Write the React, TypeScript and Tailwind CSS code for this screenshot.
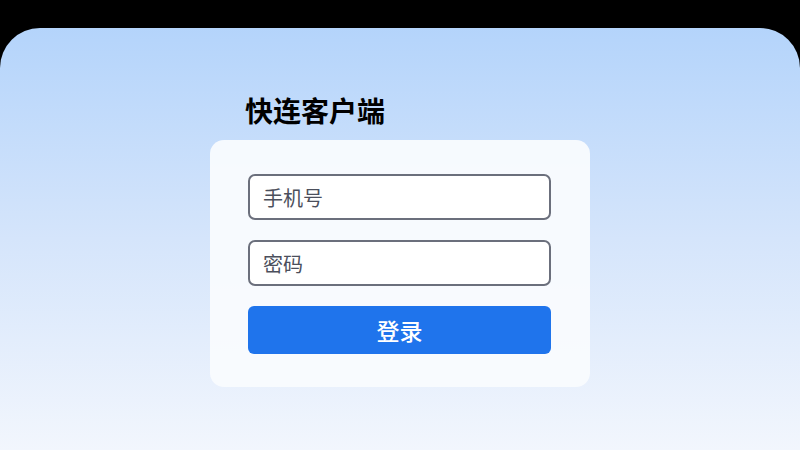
export default function App() {
  return (
    <div className="w-[800px] h-[450px] bg-black pt-[28px] overflow-hidden" style={{ fontFamily: '"Noto Sans CJK SC", "Noto Sans", sans-serif' }}>
      <div className="h-[422px] rounded-t-[40px] bg-gradient-to-b from-[#b4d4fb] via-[#d5e5fb] to-[#f2f6fd] flex flex-col items-center">
        <div className="w-[380px] mt-[64px]">
          <h1 className="ml-[35px] text-[28px] leading-[36px] font-bold text-black">快连客户端</h1>
          <div className="mt-[12px] rounded-[14px] bg-[#f9fbfe]/95 pt-[34px] pb-[33px] pl-[38px] pr-[39px] flex flex-col gap-[20px]">
            <input
              placeholder="手机号"
              className="h-[46px] w-full rounded-[7px] border-2 border-[#6b6f7c] bg-white px-[13px] text-[20px] placeholder:text-[#4b4f5c] outline-none"
            />
            <input
              placeholder="密码"
              type="password"
              className="h-[46px] w-full rounded-[7px] border-2 border-[#6b6f7c] bg-white px-[13px] text-[20px] placeholder:text-[#4b4f5c] outline-none"
            />
            <button className="h-[48px] w-full rounded-[6px] bg-[#1f74ec] text-white text-[23px] font-medium">登录</button>
          </div>
        </div>
      </div>
    </div>
  );
}
